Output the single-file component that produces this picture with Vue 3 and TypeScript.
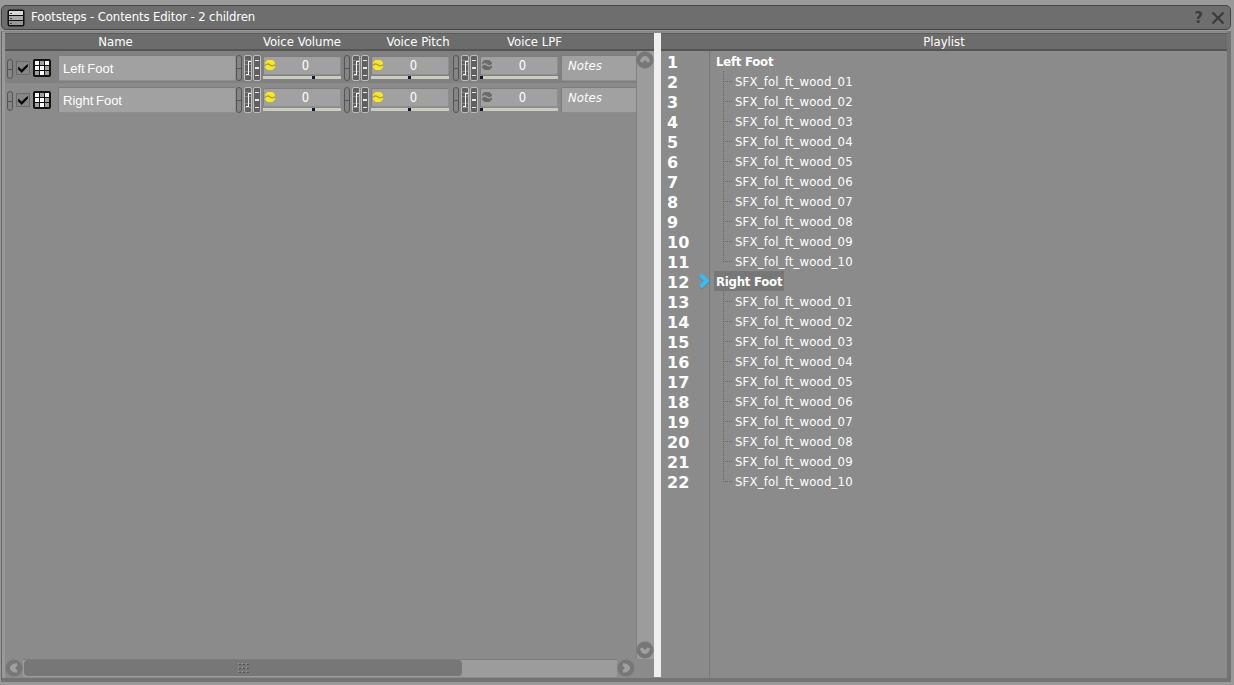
<script setup lang="ts">
interface Voice { kind: string; value: number; active: boolean; pos: number }
interface Item { name: string; voices: Voice[] }
interface Entry { n: number; label: string; group: boolean; selected: boolean; last: boolean }

const voices = (): Voice[] => [
  { kind: 'volume', value: 0, active: true, pos: 49 },
  { kind: 'pitch', value: 0, active: true, pos: 37 },
  { kind: 'lpf', value: 0, active: false, pos: 0 },
]
const items: Item[] = [
  { name: 'Left Foot', voices: voices() },
  { name: 'Right Foot', voices: voices() },
]
const entries: Entry[] = []
for (const item of items) {
  entries.push({ n: entries.length + 1, label: item.name, group: true, selected: item.name === 'Right Foot', last: false })
  for (let i = 1; i <= 10; i++) {
    entries.push({
      n: entries.length + 1,
      label: 'SFX_fol_ft_wood_' + String(i).padStart(2, '0'),
      group: false,
      selected: false,
      last: i === 10,
    })
  }
}
const cells = [0, 1, 2, 3, 4, 5, 6, 7, 8]
const litCells = [0, 2, 3, 4, 7]
</script>

<template>
  <div class="window">
    <header class="titlebar">
      <svg class="app-icon" width="18" height="18" viewBox="0 0 18 18">
        <rect x="0.5" y="0.5" width="17" height="17" rx="2" fill="#111" />
        <rect x="2" y="2" width="14" height="4" fill="#d8d8d8" />
        <rect x="2" y="7" width="14" height="4" fill="#a9a9a9" />
        <rect x="2" y="12" width="14" height="4" fill="#999" />
        <path d="M3 4.500h2M3 9.500h2M3 14.500h2" stroke="#444" />
      </svg>
      <span class="title">Footsteps - Contents Editor - 2 children</span>
      <span class="help">?</span>
      <svg class="close" width="14" height="14" viewBox="0 0 14 14">
        <path d="M1.500 1.500L12.500 12.500M12.500 1.500L1.500 12.500" stroke="#3c3c3c" stroke-width="2.400" />
      </svg>
    </header>

    <main class="panel">
      <section class="contents">
        <div class="head columns-head">
          <span class="h-name">Name</span>
          <span class="h-vol">Voice Volume</span>
          <span class="h-pitch">Voice Pitch</span>
          <span class="h-lpf">Voice LPF</span>
        </div>
        <div class="body">
          <div class="rows">
            <div v-for="(item, r) in items" :key="item.name" class="row" :class="{ alt: r === 0 }">
              <span class="pill first"></span>
              <svg class="check" width="14" height="14" viewBox="0 0 14 14">
                <rect x="0.5" y="0.5" width="13" height="13" fill="#858585" stroke="#6b6b6b" />
                <path d="M2.500 6L5.500 9L11.500 3.500V5.500L5.800 11.500L2.500 8.500Z" fill="#000" stroke="#000" stroke-width=".7" />
              </svg>
              <svg class="grid-icon" width="18" height="18" viewBox="0 0 18 18">
                <rect width="18" height="18" rx="2" fill="#111" />
                <rect
                  v-for="c in cells" :key="c"
                  :x="2 + (c % 3) * 5" :y="2 + Math.floor(c / 3) * 5"
                  width="4" height="4" :fill="litCells.includes(c) ? '#fff' : '#a0a0a0'"
                />
              </svg>
              <div class="field name">{{ item.name }}</div>
              <div v-for="v in item.voices" :key="v.kind" class="voice" :class="v.kind">
                <span class="pill"></span>
                <svg class="link" width="8" height="26" viewBox="0 0 8 26">
                  <rect x="0.5" y="0.5" width="7" height="25" rx="1.500" fill="#606060" stroke="#bcbcbc" />
                  <path d="M1 5.500h6M1 9.500h6M1 16.500h6M1 20.500h6" stroke="#888" />
                  <path d="M4.500 6V20M4 6.500H7M2 19.500H5" stroke="#fff" fill="none" />
                </svg>
                <svg class="state" width="8" height="26" viewBox="0 0 8 26">
                  <rect x="0.5" y="0.5" width="7" height="25" rx="1.500" fill="#606060" stroke="#bcbcbc" />
                  <path d="M2 5.500h4M2 20.500h4" stroke="#e8e8e8" />
                  <path d="M2 13h4" stroke="#e8e8e8" stroke-width="2" />
                </svg>
                <div class="slider">
                  <div class="field value">
                    <svg width="10" height="10" viewBox="0 0 10 10">
                      <path d="M2.500 0H7.500L10 2.500V7.500L7.500 10H2.500L0 7.500V2.500Z" :fill="v.active ? '#fbe81a' : '#6c6c6c'" />
                      <path d="M0 5.500Q2.500 2.800 5 5T10 4.300" fill="none" :stroke="v.active ? '#a9a045' : '#a1a1a1'" stroke-width="1.300" />
                    </svg>
                    <span>{{ v.value }}</span>
                  </div>
                  <div class="track"><i :style="{ marginLeft: v.pos + 'px' }"></i></div>
                </div>
              </div>
              <div class="field notes">Notes</div>
            </div>
          </div>
          <div class="vscroll">
            <svg width="18" height="18" viewBox="0 0 18 18">
              <circle cx="9" cy="9" r="8.500" fill="#777" />
              <path d="M4 10.500C5 6 7.500 5 9 5S13 6 14 10.500L11.500 11.500L9 9L6.500 11.500Z" fill="#a0a0a0" />
            </svg>
            <svg width="18" height="18" viewBox="0 0 18 18">
              <circle cx="9" cy="9" r="8.500" fill="#777" />
              <path d="M4 7.500L6.500 6.500L9 9L11.500 6.500L14 7.500C13 11.500 11 13 9 13S5 11.500 4 7.500Z" fill="#a0a0a0" />
            </svg>
          </div>
        </div>
        <div class="hscroll">
          <svg width="18" height="18" viewBox="0 0 18 18">
            <circle cx="9" cy="9" r="8.500" fill="#777" />
            <path d="M11.500 4L12.500 6.500L10 9L12.500 11.500L11.500 14C7.500 13 5 11.500 5 9S7.500 5 11.500 4Z" fill="#a0a0a0" />
          </svg>
          <div class="bar">
            <div class="thumb">
              <svg width="11" height="10" viewBox="0 0 11 10">
                <path d="M1 1.500H11M1 5.500H11M1 9.500H11" stroke="#555" stroke-dasharray="2 2" />
                <path d="M0 .5H10M0 4.500H10M0 8.500H10" stroke="#a0a0a0" stroke-dasharray="1 3" />
              </svg>
            </div>
          </div>
          <svg width="18" height="18" viewBox="0 0 18 18">
            <circle cx="9" cy="9" r="8.500" fill="#777" />
            <path d="M6.500 4L5.500 6.500L8 9L5.500 11.500L6.500 14C10.500 13 13 11.500 13 9S10.500 5 6.500 4Z" fill="#a0a0a0" />
          </svg>
        </div>
      </section>

      <div class="splitter"></div>

      <section class="playlist">
        <div class="head"><span>Playlist</span></div>
        <div class="list">
          <div v-for="e in entries" :key="e.n" class="entry">
            <span class="num">{{ e.n }}</span>
            <span class="gutter">
              <svg v-if="e.selected" width="13" height="17" viewBox="0 0 13 17">
                <path d="M4.500 4L10 9L4.500 14" fill="none" stroke="#666" stroke-width="4" stroke-linecap="round" opacity=".5" />
                <path d="M4.500 3L9.800 8L4.500 13" fill="none" stroke="#2fc0fb" stroke-width="4" stroke-linecap="round" />
              </svg>
            </span>
            <span v-if="e.group" class="group" :class="{ selected: e.selected }">{{ e.label }}</span>
            <template v-else>
              <svg class="branch" width="10" height="20" viewBox="0 0 10 20">
                <path :d="e.last ? 'M.5 0V11' : 'M.5 0V20'" stroke="#666" stroke-dasharray="1 1" />
                <path d="M2 10.500H9" stroke="#666" stroke-dasharray="1 1" />
              </svg>
              <span class="leaf">{{ e.label }}</span>
            </template>
          </div>
        </div>
      </section>
    </main>
  </div>
</template>

<style>
body { background: #999; overflow: hidden; }
</style>

<style scoped>
* { box-sizing: border-box; }
.window {
  width: 1234px; height: 685px; padding: 5px 3px 3px 1px;
  background: #999; color: #fff;
  font: 13px/16px "DejaVu Sans Condensed", "DejaVu Sans", sans-serif;
  font-stretch: condensed;
  white-space: nowrap;
}
span, svg { display: block; flex: none; }
.titlebar {
  height: 25px; display: flex; align-items: center; padding: 0 5px;
  background: #6e6e6e; border: 1px solid #444; border-radius: 5px;
}
.title { margin-left: 6px; padding-bottom: 2px; letter-spacing: -0.12px; }
.help { margin-left: auto; color: #3c3c3c; font: bold 15px/16px "DejaVu Sans", sans-serif; }
.close { margin-left: 8px; }
.panel {
  height: 651px; margin-top: 1px; padding-top: 1px; display: flex;
  background: #8b8b8b; border: 1px solid #666; border-top-color: #858585;
  border-left-color: #666; border-bottom: 4px solid #737373; border-right: 4px solid #737373;
  box-shadow: inset 3px 0 #999;
}
.contents { width: 649px; margin-left: 3px; display: flex; flex-direction: column; height: 644px; }
.head {
  height: 18px; flex: none; background: #6c6c6c; border-top: 1px solid #5b5b5b;
  border-bottom: 2px solid #555; line-height: 16px; text-align: center;
}
.columns-head { display: flex; }
.h-name { width: 221px; }
.h-vol { width: 152px; }
.h-pitch { width: 80px; }
.h-lpf { width: 153px; }
.body { flex: 1; display: flex; min-height: 0; }
.rows { flex: 1; min-width: 0; overflow: hidden; }
.row { height: 32px; display: flex; align-items: flex-start; padding: 4px 0 0 2px; }
.row.alt { background: #818181; }
.pill {
  width: 6px; height: 26px; border: 1px solid #555; border-radius: 3px;
  background: linear-gradient(#858585 12px, #555 12px, #555 13px, #858585 13px);
}
.pill.first { height: 20px; margin-top: 4px; background: linear-gradient(#858585 9px, #555 9px, #555 10px, #858585 10px); }
.check { margin: 6px 0 0 3px; }
.grid-icon { margin: 4px 0 0 3px; }
.field { background: #a1a1a1; border: 1px solid #8e8e8e; border-top-color: #7d7d7d; border-left-color: #7d7d7d; border-radius: 2px; }
.name { width: 178px; flex: none; height: 26px; margin-left: 7px; padding-left: 4px; font: 13px/26px "Liberation Sans", Arial, sans-serif; word-spacing: -1px; }
.voice { display: flex; width: 105px; flex: none; }
.voice.pitch { margin-left: 3px; }
.voice.lpf { width: 106px; margin-left: 4px; }
.link { margin-left: 2px; }
.state { margin-left: 1px; }
.slider { width: 78px; margin: 1px 0 0 2px; }
.value { height: 19px; display: flex; align-items: flex-start; padding-left: 1px; }
.value svg { margin-top: 3px; }
.value span { width: 61px; font-size: 14px; line-height: 17px; text-align: center; transform: scaleX(.92); }
.track { height: 3px; background: #ccccbe; margin-top: 1px; }
.track i { display: block; width: 3px; height: 3px; background: #071d2c; }
.notes { width: 80px; height: 26px; flex: none; margin-left: 2px; padding-left: 6px; line-height: 20px; font-style: italic; }
.vscroll {
  width: 18px; display: flex; flex-direction: column; justify-content: space-between; align-items: center;
  background: #9c9c9c; border-left: 1px solid #818181;
}
.vscroll svg { margin-left: -1px; }
.hscroll { height: 18px; flex: none; display: flex; }
.bar { width: 594px; height: 18px; border-top: 1px solid #7d7d7d; background: #9c9c9c; }
.thumb { width: 438px; height: 16px; margin-left: 1px; border-radius: 4px; background: #777; display: flex; align-items: center; justify-content: center; }
.splitter { width: 7px; height: 644px; background: #efefef; }
.playlist { flex: 1; height: 644px; display: flex; flex-direction: column; }
.list { flex: 1; background: linear-gradient(to right, transparent 48px, #777 48px, #777 49px, transparent 49px); }
.entry { height: 20px; display: flex; align-items: center; }
.num { width: 36px; padding-left: 6px; font: bold 16px/20px "DejaVu Sans", sans-serif; padding-top: 3px; }
.gutter { width: 17px; }
.group { padding: 0 2px; height: 20px; line-height: 21px; font-weight: bold; letter-spacing: -0.22px; }
.group.selected { background: #777; }
.branch { margin-left: 9px; }
.leaf { margin-left: 2px; letter-spacing: 0.17px; padding-top: 1px; }
</style>
